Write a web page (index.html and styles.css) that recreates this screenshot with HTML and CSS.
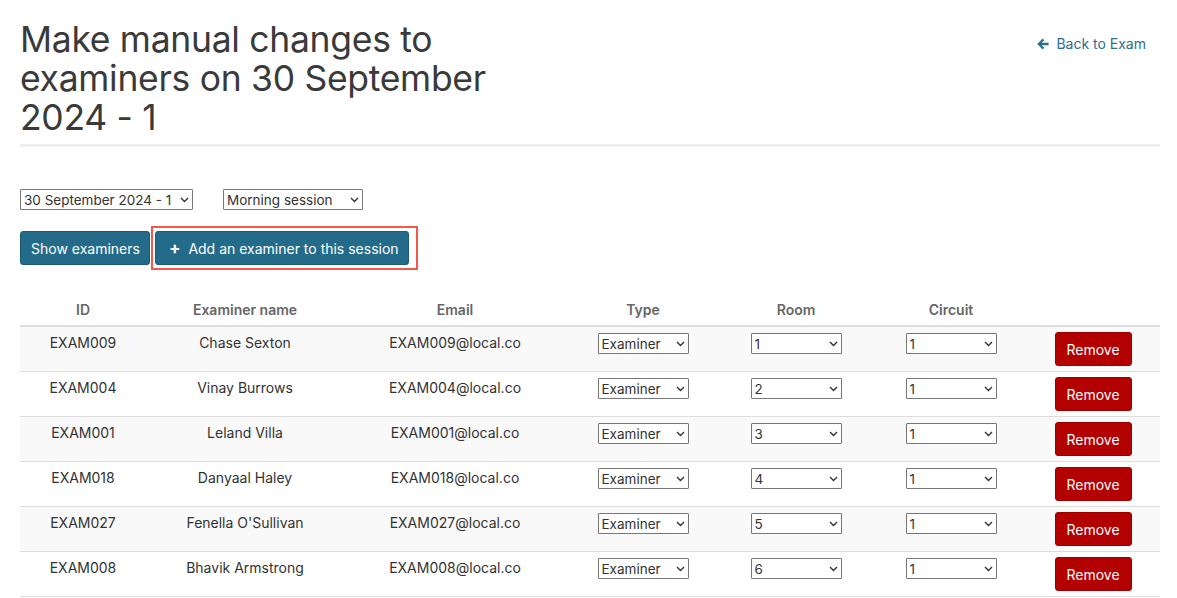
FILE: index.html
```html
<!DOCTYPE html>
<html lang="en">
<head>
  <meta charset="UTF-8" />
  <meta name="viewport" content="width=device-width, initial-scale=1.0" />
  <title>Manual examiner changes</title>
  <link rel="stylesheet" href="styles.css">
</head>
<body>
  <div class="page">
    <header class="page-head">
      <h1>Make manual changes to examiners on 30 September 2024 - 1</h1>
      <a class="back-link" href="#">
        <svg width="12" height="12" viewBox="0 0 12 12"><path d="M5.6 0.6 0.4 6l5.2 5.4 1.6-1.6-2.6-2.5h7V4.7h-7l2.6-2.5z" fill="currentColor"/></svg>
        Back to Exam
      </a>
    </header>

    <div class="filters">
      <label class="pick pick-date">
        <select><option>30 September 2024 - 1</option></select>
        <svg class="chev" width="9" height="6" viewBox="0 0 9 6"><path d="M1 1l3.5 3.5L8 1" fill="none" stroke="currentColor" stroke-width="1.4"/></svg>
      </label>
      <label class="pick pick-session">
        <select><option>Morning session</option></select>
        <svg class="chev" width="9" height="6" viewBox="0 0 9 6"><path d="M1 1l3.5 3.5L8 1" fill="none" stroke="currentColor" stroke-width="1.4"/></svg>
      </label>
    </div>

    <div class="actions">
      <button class="btn">Show examiners</button>
      <span class="focus-ring">
        <button class="btn btn-add"><span class="plus">+</span> Add an examiner to this session</button>
      </span>
    </div>

    <table class="examiners">
      <thead>
        <tr>
          <th class="c-id">ID</th>
          <th class="c-name">Examiner name</th>
          <th class="c-mail">Email</th>
          <th class="c-type">Type</th>
          <th class="c-room">Room</th>
          <th class="c-circ">Circuit</th>
          <th class="c-act"></th>
        </tr>
      </thead>
      <tbody id="rows"></tbody>
    </table>
  </div>

<script>
  const examiners = [
    ["EXAM009", "Chase Sexton", 1],
    ["EXAM004", "Vinay Burrows", 2],
    ["EXAM001", "Leland Villa", 3],
    ["EXAM018", "Danyaal Haley", 4],
    ["EXAM027", "Fenella O'Sullivan", 5],
    ["EXAM008", "Bhavik Armstrong", 6]
  ];
  const chev = '<svg class="chev" width="9" height="6" viewBox="0 0 9 6"><path d="M1 1l3.5 3.5L8 1" fill="none" stroke="currentColor" stroke-width="1.4"/></svg>';
  const pick = v => `<label class="pick pick-cell"><select><option>${v}</option></select>${chev}</label>`;

  document.getElementById("rows").innerHTML = examiners.map(([id, name, room]) => `
    <tr>
      <td>${id}</td>
      <td>${name}</td>
      <td>${id}@local.co</td>
      <td>${pick("Examiner")}</td>
      <td>${pick(room)}</td>
      <td>${pick(1)}</td>
      <td class="act"><button class="btn-remove">Remove</button></td>
    </tr>`).join("");
</script>
</body>
</html>
```

FILE: styles.css
```css
body {
  margin:0;
  font-family:Inter, "Noto Sans", sans-serif;
  font-size:14px;
  color:#333;
  background:#fff;
}
.page {
  width:1140px;
  margin-left:20px;
}
.page-head {
  display:flex;
  justify-content:space-between;
  align-items:flex-start;
  border-bottom:3px solid #eee;
  padding-bottom:7px;
}
h1 {
  margin:20px 0 0;
  width:500px;
  font-size:35.5px;
  font-weight:400;
  line-height:39px;
  color:#3a3a3a;
  letter-spacing:-0.3px;
}
.back-link {
  margin:35px 14px 0 0;
  display:flex;
  align-items:center;
  gap:7px;
  color:#2a6f8f;
  text-decoration:none;
  font-size:14px;
}
.filters {
  display:flex;
  gap:30px;
  margin-top:42px;
}
.pick {
  position:relative;
  display:inline-block;
}
.pick select {
  appearance:none;
  font:inherit;
  font-size:13.5px;
  color:#333;
  background:#fff;
  border:1px solid #767676;
  border-radius:1px;
  height:21px;
  padding:0 15px 0 3px;
  margin:0;
}
.pick .chev {
  position:absolute;
  right:4px;
  top:8px;
  color:#333;
  pointer-events:none;
}
.pick-date select { width:173px; }
.pick-session select { width:140px; }
.actions {
  display:flex;
  align-items:center;
  gap:1px;
  margin-top:16px;
}
.btn {
  font:inherit;
  font-size:14px;
  color:#fff;
  background:#246b8a;
  border:1px solid #1d5a75;
  border-radius:3px;
  height:34px;
  padding:0 9px 0 10px;
}
.focus-ring {
  display:inline-block;
  padding:3px 7px 3px 2px;
  border:2px solid #f2594b;
}
.btn-add { padding:0 9px 0 13px; }
.plus {
  font-weight:700;
  font-size:17px;
  margin-right:4px;
}
.examiners {
  width:100%;
  border-collapse:collapse;
  margin-top:23px;
}
.examiners th {
  color:#666;
  font-weight:600;
  text-align:center;
  padding:8px 8px 7px;
  border-bottom:2px solid #ddd;
}
.examiners td {
  text-align:center;
  vertical-align:top;
  padding:7px 8px 0;
  height:37px;
  border-bottom:1px solid #ddd;
}
.examiners td.act { padding-right:12px; }
.examiners tbody tr:nth-child(odd) { background:#f9f9f9; }
.c-id { width:110px; }
.c-name { width:182px; }
.c-mail { width:206px; }
.c-type { width:138px; }
.c-room { width:136px; }
.c-circ { width:142px; }
.pick-cell {
  display:block;
  width:91px;
  margin:-1px auto 0;
}
.pick-cell select { width:91px; }
.btn-remove {
  display:block;
  font:inherit;
  font-size:14px;
  color:#fff;
  background:#b30000;
  border:1px solid #9e0000;
  border-radius:3px;
  width:77px;
  height:34px;
  padding:0;
  margin:-2px auto 0;
}
```
